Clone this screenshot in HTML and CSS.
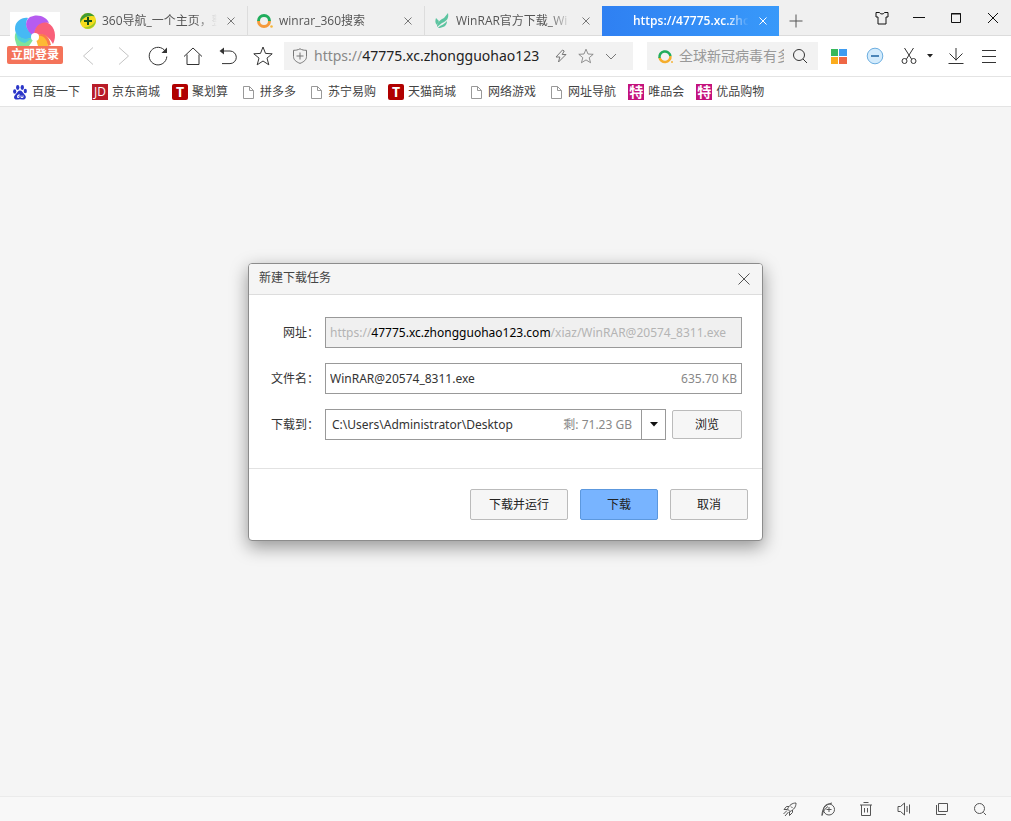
FILE: index.html
```html
<!DOCTYPE html>
<html lang="zh-CN">
<head>
  <meta charset="UTF-8" />
  <meta name="viewport" content="width=device-width, initial-scale=1.0"/>
  <title>新建下载任务</title>
  <link rel="stylesheet" href="styles.css">
</head>
<body>

  <header>
    <button class="login" type="button">
      <svg class="login-logo" width="50" height="38" viewBox="0 0 50 38">
        <rect width="50" height="38" fill="#fff"/>
        <path d="M6 31C3 23 6 17 12 16C17 16 22 20 25 25L19 34H7z" fill="#7fe39a"/>
        <path d="M24 24C14 31 5 24 5 17C5 9 12 5 18 6C14 12 17 19 24 24z" fill="#46b9f4"/>
        <path d="M6 20C9 27 17 29 24 25L15 31C9 30 6 26 6 20z" fill="#4fd0dc"/>
        <path d="M24 24C16 19 13 10 20 5C28 1 37 5 39 11C31 10 25 15 24 24z" fill="#b65cf0"/>
        <path d="M24 24C24 14 31 9 38 11C45 15 47 24 43 32C39 24 32 20 24 24z" fill="#f9607a"/>
        <path d="M27 23C33 20 39 23 41 33L38 34C36 28 32 25 27 23z" fill="#fb7a4c"/>
        <path d="M25 24C32 22 37 26 38 34H28z" fill="#fdb934"/>
        <circle cx="25" cy="25" r="4" fill="#fff"/>
      </svg>
      <span class="login-text">立即登录</span>
    </button>

    <div class="tabs">
      <div class="tab">
        <svg width="16" height="16" viewBox="0 0 16 16"><circle cx="8" cy="8" r="8" fill="#f5dc1e"/><path d="M8 0a8 8 0 0 0-7.500 10C2 5 8 2 14.500 3.500A8 8 0 0 0 8 0z" fill="#3f9c35"/><path d="M15.500 6c0 4-4 8-12 8.500a8 8 0 0 0 12-8.500z" fill="#9ccb28"/><path d="M8 4v8M4 8h8" stroke="#12501c" stroke-width="2"/></svg>
        <span class="tab-title">360导航_一个主页，整</span>
        <button class="tab-close" type="button" aria-label="关闭"><svg width="8" height="8" viewBox="0 0 8 8"><path d="M.5.5l7 7M7.500.5l-7 7"/></svg></button>
      </div>
      <div class="tab">
        <svg width="16" height="16" viewBox="0 0 16 16" fill="none" stroke-width="3"><path d="M1.500 8a5.500 5.500 0 0 1 11 0" stroke="#20ad5c"/><path d="M12.500 8a5.500 5.500 0 0 1-11 0" stroke="#f59a3c"/><circle cx="14.500" cy="13.500" r="1.300" fill="#f5b53c" stroke="none"/></svg>
        <span class="tab-title">winrar_360搜索</span>
        <button class="tab-close" type="button" aria-label="关闭"><svg width="8" height="8" viewBox="0 0 8 8"><path d="M.5.5l7 7M7.500.5l-7 7"/></svg></button>
      </div>
      <div class="tab">
        <svg width="16" height="16" viewBox="0 0 16 16" fill="#5cc4a0"><path d="M14 0c1 5-1 8-6 10l-5 4c0-5 3-7 7-9z"/><path d="M2 5l3 3-2 4c-2-2-2-4-1-7zM13 8c0 5-4 7-9 7 2-3 6-3 9-7z"/></svg>
        <span class="tab-title">WinRAR官方下载_Wi</span>
        <button class="tab-close" type="button" aria-label="关闭"><svg width="8" height="8" viewBox="0 0 8 8"><path d="M.5.5l7 7M7.500.5l-7 7"/></svg></button>
      </div>
      <div class="tab active">
        <span class="tab-blank"></span>
        <span class="tab-title">https://47775.xc.zhc</span>
        <button class="tab-close" type="button" aria-label="关闭"><svg width="8" height="8" viewBox="0 0 8 8"><path d="M.5.5l7 7M7.500.5l-7 7"/></svg></button>
      </div>
      <button class="tab-add" type="button" aria-label="新标签页"><svg width="14" height="14" viewBox="0 0 14 14"><path d="M7 .5v13M.5 7h13"/></svg></button>
      <div class="window-btns">
        <button type="button" aria-label="皮肤"><svg width="14" height="14" viewBox="0 0 14 14"><path d="M4.500 1.500h-3.500v4.500h2v7h8V6h2V1.500h-3.500C9 3.500 5 3.500 4.500 1.500z"/></svg></button>
        <button type="button" aria-label="最小化"><svg width="14" height="14" viewBox="0 0 14 14"><path d="M1 6.500h12"/></svg></button>
        <button type="button" aria-label="最大化"><svg width="14" height="14" viewBox="0 0 14 14"><path d="M2.500 2.500h9v9h-9zM2 3h10"/></svg></button>
        <button type="button" aria-label="关闭窗口"><svg width="14" height="14" viewBox="0 0 14 14"><path d="M2 2l10 10M12 2L2 12"/></svg></button>
      </div>
    </div>

    <div class="toolbar">
      <button class="tool dim" type="button" aria-label="后退"><svg width="20" height="20" viewBox="0 0 20 20"><path d="M15 1.500L5.500 10l9.500 8.500"/></svg></button>
      <button class="tool dim" type="button" aria-label="前进"><svg width="20" height="20" viewBox="0 0 20 20"><path d="M6 1.500L15.500 10 6 18.500"/></svg></button>
      <button class="tool" type="button" aria-label="刷新"><svg width="20" height="20" viewBox="0 0 20 20"><path d="M17.500 5.500a8.800 8.800 0 1 0 1.300 5"/><path d="M19 1.500v5.500h-5.500z" fill="#333" stroke="none"/></svg></button>
      <button class="tool" type="button" aria-label="主页"><svg width="20" height="20" viewBox="0 0 20 20"><path d="M1 10.500L10 2l9 8.500M4 8.500v10h12v-10"/></svg></button>
      <button class="tool" type="button" aria-label="恢复"><svg width="20" height="20" viewBox="0 0 20 20"><path d="M3 5h9a6.300 6.300 0 0 1 0 12.600H4"/><path d="M1.500 5L6 1.500v7z" fill="#333" stroke="none"/></svg></button>
      <button class="tool" type="button" aria-label="收藏"><svg width="20" height="20" viewBox="0 0 20 20"><path d="M10 1l2.500 6.400 6.700.4-5.200 4.300 1.800 6.700L10 15l-5.800 3.800L6 12.100.8 7.800l6.700-.4z"/></svg></button>

      <div class="address">
        <svg width="16" height="16" viewBox="0 0 16 16"><path d="M8 .8c2 1.200 4.200 1.500 6.500 1.500v6.200c0 3.300-2.500 5.300-6.500 6.900-4-1.600-6.500-3.600-6.500-6.900V2.300C3.800 2.300 6 2 8 .8zM8 4.500v7M4.500 8h7"/></svg>
        <span class="scheme">https://</span>
        <input class="address-input" type="text" value="47775.xc.zhongguohao123" aria-label="地址栏">
        <button type="button" aria-label="极速模式"><svg width="14" height="14" viewBox="0 0 14 14"><path d="M8.500 1L2 8h3.800L4.500 13 12 5.500H8.200l2-3.500z"/></svg></button>
        <button type="button" aria-label="收藏网页"><svg width="16" height="16" viewBox="0 0 20 20"><path d="M10 1.500l2.500 6 6.500.4-5 4.200 1.700 6.300-5.700-3.500-5.700 3.500L6 12.100 1 7.900l6.500-.4z"/></svg></button>
        <button type="button" aria-label="展开"><svg width="12" height="12" viewBox="0 0 12 12"><path d="M1 4l5 5 5-5"/></svg></button>
      </div>

      <div class="search">
        <svg width="16" height="16" viewBox="0 0 16 16" fill="none" stroke-width="2.500"><path d="M13.500 8a5.500 5.500 0 0 1-11 1" stroke="#f5ad2c"/><path d="M2.500 10a5.500 5.500 0 1 1 11-2" stroke="#20ad5c"/><circle cx="15" cy="14" r="1" fill="#f5b53c" stroke="none"/></svg>
        <input class="search-input" type="text" placeholder="全球新冠病毒有多" aria-label="搜索">
        <button type="button" aria-label="搜索"><svg width="16" height="16" viewBox="0 0 16 16"><circle cx="7" cy="7" r="5.500"/><path d="M11 11l4 4"/></svg></button>
      </div>

      <div class="extras">
        <button type="button" aria-label="扩展"><svg class="solid" width="16" height="16" viewBox="0 0 16 16"><path d="M0 1h7v7H0z" fill="#38b85c"/><path d="M8 1h8v7H8z" fill="#3f9cf0"/><path d="M0 9h7v7H0z" fill="#fbac1d"/><path d="M8 9h8v7H8z" fill="#ef6745"/></svg></button>
        <button type="button" aria-label="广告拦截"><svg width="18" height="18" viewBox="0 0 18 18"><circle cx="9" cy="9" r="7.800" fill="#d3ebfc" stroke="#6caee0"/><path d="M5 9h8" stroke="#4c86b8" stroke-width="2"/></svg></button>
        <button class="cut" type="button" aria-label="截图"><svg width="16" height="18" viewBox="0 0 16 18"><path d="M3.500 1l7 11M12.500 1l-7 11"/><circle cx="3.500" cy="14" r="2.500"/><circle cx="12.500" cy="14" r="2.500"/></svg><svg width="6" height="4" viewBox="0 0 6 4"><path d="M0 0h6L3 3.500z" fill="#222" stroke="none"/></svg></button>
        <button class="narrow" type="button" aria-label="下载"><svg width="16" height="18" viewBox="0 0 16 18"><path d="M8 1v12.500M1.500 6.500L8 13l6.500-6.500M.5 16.500h15"/></svg></button>
        <button class="narrow" type="button" aria-label="菜单"><svg width="14" height="16" viewBox="0 0 14 16"><path d="M0 2.500h14M0 8.500h14M0 14.500h14"/></svg></button>
      </div>
    </div>

    <nav class="bookmarks">
      <a href="#"><svg width="16" height="16" viewBox="0 0 16 16" fill="#2b36c8"><ellipse cx="5.700" cy="3.500" rx="1.700" ry="2.400"/><ellipse cx="10.300" cy="3.500" rx="1.700" ry="2.400"/><ellipse cx="2.700" cy="7.500" rx="1.600" ry="2.200"/><ellipse cx="13.300" cy="7" rx="1.600" ry="2.200"/><path d="M8 6.500c2 0 2.500 2 4.500 4 2.500 2.500 1 5-1 5-1.500 0-2-.3-3.500-.3s-2 .3-3.500.3c-2.500 0-3.500-2.500-1-5 2-2 2.500-4 4.500-4z"/><path d="M7 10v3.500H5.500v-2H7M9 11.500v2h2v-2" fill="none" stroke="#fff" stroke-width=".9"/></svg>百度一下</a>
      <a href="#"><span class="badge jd">JD</span>京东商城</a>
      <a href="#"><span class="badge tmall">T</span>聚划算</a>
      <a href="#"><svg class="page" width="16" height="16" viewBox="0 0 16 16"><path d="M3.500 2.500h6l4 4v8h-10zM9.500 2.500v4h4"/></svg>拼多多</a>
      <a href="#"><svg class="page" width="16" height="16" viewBox="0 0 16 16"><path d="M3.500 2.500h6l4 4v8h-10zM9.500 2.500v4h4"/></svg>苏宁易购</a>
      <a href="#"><span class="badge tmall">T</span>天猫商城</a>
      <a href="#"><svg class="page" width="16" height="16" viewBox="0 0 16 16"><path d="M3.500 2.500h6l4 4v8h-10zM9.500 2.500v4h4"/></svg>网络游戏</a>
      <a href="#"><svg class="page" width="16" height="16" viewBox="0 0 16 16"><path d="M3.500 2.500h6l4 4v8h-10zM9.500 2.500v4h4"/></svg>网址导航</a>
      <a href="#"><span class="badge vip">特</span>唯品会</a>
      <a href="#"><span class="badge vip">特</span>优品购物</a>
    </nav>
  </header>

  <main>
    <form class="dialog">
      <div class="dialog-header">
        <h2>新建下载任务</h2>
        <button type="button" aria-label="关闭"><svg width="12" height="12" viewBox="0 0 12 12"><path d="M.5.5l11 11M11.500.5l-11 11"/></svg></button>
      </div>

      <div class="dialog-body">
        <div class="row">
          <label for="url">网址：</label>
          <div class="field url">
            <span>https://</span>
            <input type="text" id="url" value="47775.xc.zhongguohao123.com" readonly>
            <span>/xiaz/WinRAR@20574_8311.exe</span>
          </div>
        </div>
        <div class="row">
          <label for="filename">文件名：</label>
          <div class="field">
            <input type="text" id="filename" value="WinRAR@20574_8311.exe">
            <span class="info">635.70 KB</span>
          </div>
        </div>
        <div class="row">
          <label for="folder">下载到：</label>
          <div class="field folder">
            <select id="folder">
              <option>C:\Users\Administrator\Desktop</option>
            </select>
            <div class="folder-info">
              <span class="info">剩: 71.23 GB</span>
              <span class="arrow"><svg width="8" height="5" viewBox="0 0 8 5"><path d="M0 0h8L4 4.500z" fill="#111" stroke="none"/></svg></span>
            </div>
          </div>
          <button class="btn browse" type="button">浏览</button>
        </div>
      </div>

      <div class="dialog-footer">
        <button class="btn wide" type="button">下载并运行</button>
        <button class="btn primary" type="button">下载</button>
        <button class="btn" type="button">取消</button>
      </div>
    </form>
  </main>

  <footer>
    <button type="button" aria-label="加速器"><svg width="16" height="16" viewBox="0 0 16 16"><path d="M14 2c-4 0-6.500 2-8.500 6L8 10.500c4-2 6-4.500 6-8.500zM7 5.500H4.500L2 8.500h3.500M10.500 9v2.500l-3 3V10.500M5 9.500L1.500 13M6.500 11L3 15M9 5.500l1.500 1.500"/></svg></button>
    <button type="button" aria-label="无痕模式"><svg width="16" height="16" viewBox="0 0 16 16"><circle cx="9" cy="8.500" r="5.500"/><path d="M2 14.500C2 8 5 3.500 12 2M2 14.500c1-4 3-7 6-9M9 6v5M6.500 8.500h5"/></svg></button>
    <button type="button" aria-label="清理"><svg width="14" height="14" viewBox="0 0 14 14"><path d="M1 3h12M4.500.5h5M2.500 3v10.500h9V3M5.500 6v4.500M8.500 6v4.500"/></svg></button>
    <button type="button" aria-label="静音"><svg width="14" height="14" viewBox="0 0 14 14"><path d="M1 4.500h2.500L7.500 1v12L3.500 9.500H1zM10 4v6M12.500 2.500v9"/></svg></button>
    <button type="button" aria-label="新窗口"><svg width="14" height="14" viewBox="0 0 14 14"><path d="M3.500 1.500h9v8h-9zM1.500 3v9.500H11"/></svg></button>
    <button type="button" aria-label="缩放"><svg width="14" height="14" viewBox="0 0 14 14"><circle cx="6.500" cy="6.500" r="5"/><path d="M10.500 10.500L13 13"/></svg></button>
  </footer>

</body>
</html>
```
FILE: styles.css
```css
* {
  box-sizing: border-box;
}

body {
  margin: 0;
  min-height: 100vh;
  display: flex;
  flex-direction: column;
  background-color: #f5f5f5;
  color: #333;
  font-family: "Open Sans", "Noto Sans CJK SC", sans-serif;
  font-size: 12px;
  line-height: 18px;
}

button, input, select {
  font: inherit;
  color: inherit;
  margin: 0;
}

button {
  display: flex;
  align-items: center;
  justify-content: center;
  padding: 0;
  border: none;
  background: none;
  cursor: pointer;
}

input {
  min-width: 0;
  padding: 0;
  border: none;
  outline: none;
  background: none;
}

svg {
  display: block;
  flex: none;
}

button svg {
  fill: none;
  stroke: #333;
}

button .solid {
  stroke: none;
}

header {
  position: relative;
  background-color: #fff;
}

/* login badge over the tab strip and the toolbar */
.login {
  position: absolute;
  top: 12px;
  left: 7px;
  flex-direction: column;
}

.login-logo {
  margin-bottom: -4px;
  stroke: none;
}

.login-text {
  width: 56px;
  border-radius: 2px;
  background-color: #f4735a;
  color: #fff;
  font-weight: bold;
}

/* tabs */
.tabs {
  display: flex;
  height: 36px;
  padding-left: 71px;
  background-color: #f0f0f0;
  border-bottom: 1px solid #dcdcdc;
}

.tab {
  display: flex;
  align-items: center;
  flex: 0 1 177px;
  min-width: 0;
  margin: 6px 0 -1px;
  padding: 0 8px 0 9px;
  border-right: 1px solid #ddd;
}

.tab:nth-child(3) {
  border-right: none;
}

.tab-blank {
  flex: none;
  width: 16px;
}

.tab-title {
  flex: 1;
  margin: 0 6px;
  overflow: hidden;
  white-space: nowrap;
  color: #555;
  -webkit-mask-image: linear-gradient(to right, #000 80%, transparent);
  mask-image: linear-gradient(to right, #000 80%, transparent);
}

.tab-close {
  width: 16px;
  height: 16px;
}

.tab-close svg {
  stroke: #777;
}

.tab.active {
  border-right: none;
  background: linear-gradient(to right, #2f80f2, #3899fa);
}

.tab.active .tab-title {
  color: #fff;
  font-weight: 600;
}

.tab.active .tab-close svg {
  stroke: #fff;
}

.tab-add {
  width: 34px;
  margin-top: 6px;
}

.tab-add svg {
  stroke: #555;
}

.window-btns {
  display: flex;
  margin-left: auto;
}

.window-btns button {
  width: 37px;
}

.window-btns svg {
  stroke: #111;
}

/* toolbar */
.toolbar {
  display: flex;
  align-items: center;
  height: 41px;
  padding: 0 6px 0 70px;
  border-bottom: 1px solid #e4e4e4;
}

.tool {
  width: 35px;
  height: 28px;
}

.tool.dim svg {
  stroke: #c4c4c4;
}

.address, .search {
  display: flex;
  align-items: center;
  height: 28px;
  background-color: #f2f2f2;
}

.address {
  flex: 1;
  min-width: 0;
  margin: 0 14px 0 4px;
  padding: 0 10px 0 8px;
  font-family: "Noto Sans", "Noto Sans CJK SC", sans-serif;
  font-size: 14px;
}

.address svg {
  fill: none;
  stroke: #777;
}

.address button {
  width: 25px;
}

.scheme {
  margin-left: 6px;
  color: #888;
}

.address-input {
  flex: 1;
  margin-right: 4px;
  color: #222;
}

.search {
  width: 171px;
  padding: 0 10px;
}

.search-input {
  flex: 1;
  margin: 0 8px 0 6px;
  font-size: 14px;
}

.search-input::placeholder {
  color: #999;
}

.extras {
  display: flex;
  margin-left: 3px;
}

.extras button {
  width: 36px;
  height: 28px;
}

.extras .cut {
  width: 46px;
  padding-left: 2px;
  gap: 10px;
}

.extras .narrow {
  width: 33px;
}

/* bookmarks */
.bookmarks {
  display: flex;
  align-items: center;
  gap: 12px;
  height: 30px;
  padding-left: 12px;
  border-bottom: 1px solid #e4e4e4;
}

.bookmarks a {
  display: flex;
  align-items: center;
  gap: 4px;
  color: #444;
  text-decoration: none;
  white-space: nowrap;
}

.page {
  fill: none;
  stroke: #999;
}

.badge {
  width: 16px;
  height: 16px;
  line-height: 16px;
  color: #fff;
  text-align: center;
}

.badge.jd {
  background-color: #b81c28;
}

.badge.tmall {
  border-radius: 2px;
  background-color: #b00000;
  font-size: 14px;
  font-weight: bold;
}

.badge.vip {
  background-color: #c4127d;
  font-size: 14px;
  font-weight: bold;
}

/* download dialog */
main {
  flex: 1;
  padding: 156px 20px 20px;
}

.dialog {
  max-width: 515px;
  margin: 0 auto;
  border: 1px solid #8c8c8c;
  border-radius: 4px;
  background-color: #fff;
  box-shadow: 0 6px 18px rgba(0, 0, 0, 0.4);
  font-family: "Noto Sans", "Noto Sans CJK SC", sans-serif;
}

.dialog-header {
  display: flex;
  align-items: center;
  justify-content: space-between;
  height: 31px;
  padding: 0 12px 0 10px;
  border-bottom: 1px solid #ddd;
  border-radius: 3px 3px 0 0;
  background-color: #f5f5f5;
}

.dialog-header h2 {
  margin: 0;
  padding-bottom: 2px;
  color: #444;
  font-size: 12px;
  font-weight: normal;
}

.dialog-header svg {
  stroke: #555;
}

.dialog-body {
  display: flex;
  flex-direction: column;
  gap: 15px;
  padding: 22px 20px 28px;
}

.row {
  display: flex;
  align-items: center;
}

.row label {
  flex: none;
  width: 56px;
  text-align: right;
  padding-right: 6px;
  white-space: nowrap;
}

.field {
  display: flex;
  align-items: center;
  flex: 1;
  min-width: 0;
  height: 31px;
  padding: 0 4px;
  border: 1px solid #999;
}

.field input {
  flex: 1;
}

.field.url {
  overflow: hidden;
  background-color: #f0f0f0;
  color: #b4b4b4;
}

.field.url input {
  flex: none;
  field-sizing: content;
  color: #000;
}

.info {
  color: #888;
  white-space: nowrap;
}

.folder {
  display: grid;
  padding: 0;
}

.folder select {
  grid-area: 1 / 1;
  width: 100%;
  height: 29px;
  padding: 0 0 0 6px;
  border: none;
  background: none;
  appearance: none;
}

.folder-info {
  grid-area: 1 / 1;
  justify-self: end;
  display: flex;
  align-items: center;
  height: 29px;
  pointer-events: none;
}

.arrow {
  display: flex;
  align-items: center;
  justify-content: center;
  width: 24px;
  height: 29px;
  margin-left: 9px;
  border-left: 1px solid #999;
}

.dialog-footer {
  display: flex;
  justify-content: flex-end;
  gap: 12px;
  padding: 20px 14px;
  border-top: 1px solid #e2e2e2;
}

.btn {
  width: 78px;
  height: 31px;
  border: 1px solid #bbb;
  border-radius: 2px;
  background-color: #f6f6f6;
  color: #222;
}

.btn.wide {
  width: 98px;
}

.btn.browse {
  width: 70px;
  height: 29px;
  margin-left: 6px;
}

.btn.primary {
  border-color: #5c98de;
  background-color: #78b4ff;
}

/* status bar */
footer {
  display: flex;
  justify-content: flex-end;
  height: 25px;
  padding-right: 12px;
  border-top: 1px solid #ebebeb;
  background-color: #f8f8f8;
}

footer button {
  width: 38px;
}

footer svg {
  stroke: #555;
}
```
